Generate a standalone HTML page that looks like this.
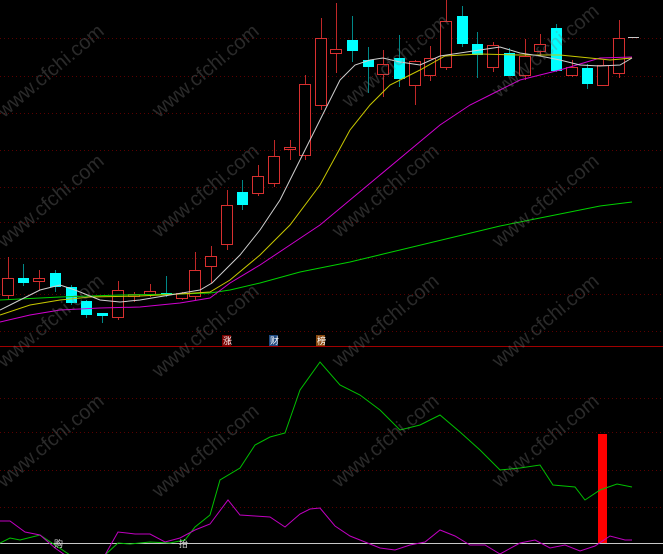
<!DOCTYPE html>
<html><head><meta charset="utf-8"><style>
html,body{margin:0;padding:0;background:#000;width:663px;height:554px;overflow:hidden}
.wm{position:absolute;font:20px "Liberation Sans",sans-serif;color:rgba(120,120,120,.35);transform:rotate(-40deg);white-space:nowrap}
</style></head><body>
<svg width="663" height="554" style="position:absolute;left:0;top:0" xmlns="http://www.w3.org/2000/svg">
<g stroke="#5a0000" stroke-dasharray="1,3" stroke-width="1">
<line x1="0" y1="38.5" x2="663" y2="38.5"/><line x1="0" y1="76.5" x2="663" y2="76.5"/><line x1="0" y1="113.5" x2="663" y2="113.5"/><line x1="0" y1="150.5" x2="663" y2="150.5"/><line x1="0" y1="187.5" x2="663" y2="187.5"/><line x1="0" y1="222.5" x2="663" y2="222.5"/><line x1="0" y1="258.5" x2="663" y2="258.5"/><line x1="0" y1="294.5" x2="663" y2="294.5"/><line x1="0" y1="331.5" x2="663" y2="331.5"/>
<line x1="0" y1="398.5" x2="663" y2="398.5"/><line x1="0" y1="432.5" x2="663" y2="432.5"/><line x1="0" y1="470.5" x2="663" y2="470.5"/><line x1="0" y1="507.5" x2="663" y2="507.5"/>
</g>
<line x1="0" y1="346.5" x2="663" y2="346.5" stroke="#a00000"/>
<g id="c"></g>
<polyline fill="none" stroke="#00d000" points="0,300 60,297 120,295 180,294 210,293 230,290 260,283 300,272 350,262 400,250 450,238 500,226 550,216 600,206 632,202"/>
<polyline fill="none" stroke="#d000d0" points="0,322 30,315 60,310 100,308 140,307 180,303 210,298 230,283 260,265 290,245 320,225 350,200 380,175 410,150 440,125 470,105 500,90 520,80 540,75 560,70 580,64 600,58 632,57"/>
<polyline fill="none" stroke="#c8c800" points="0,315 30,305 60,300 90,297 140,296 180,294 210,292 230,280 260,255 290,225 320,185 350,130 370,105 390,85 420,70 445,56 480,54 520,55 560,55 590,58 610,60 632,58"/>
<polyline fill="none" stroke="#d0d0d0" points="0,310 20,300 40,290 60,285 75,290 100,300 120,302 140,300 170,295 200,290 212,283 225,270 240,255 260,230 280,200 300,160 320,120 340,80 355,65 370,60 383,58 400,62 420,65 440,56 460,53 480,50 500,47 520,53 540,56 560,60 580,65 600,66 620,65 632,58"/>
<line x1="628" y1="37.5" x2="639" y2="37.5" stroke="#c8c8c8"/>
<line x1="0" y1="543.5" x2="663" y2="543.5" stroke="#c8c8c8"/>
<rect x="598" y="434" width="9" height="109" fill="#ff0000"/>
<polyline fill="none" stroke="#00c000" points="0,543 10,538 20,540 40,535 55,545 70,555 105,555 118,543 130,544 150,542 170,543 185,540 195,527 210,515 220,480 240,468 255,445 270,437 285,433 300,390 320,362 340,385 360,395 380,410 400,430 420,425 440,415 460,432 480,450 500,470 520,468 540,465 553,485 575,487 585,500 600,490 617,484 632,487"/>
<polyline fill="none" stroke="#c000c0" points="0,521 10,521 25,532 40,535 55,548 65,555 105,555 118,532 135,534 150,534 165,542 180,538 195,530 210,524 228,500 240,515 255,516 270,517 285,527 300,514 310,509 320,508 335,526 350,536 365,542 380,548 395,550 410,545 425,542 440,530 455,536 470,545 485,545 500,554 520,543 535,540 550,548 565,545 580,551 595,546 610,536 625,540 632,540"/>
<rect x="222" y="335" width="9" height="11" fill="#7a0000"/><text x="223" y="344" font-size="9" fill="#fff" font-family="Noto Sans CJK SC,sans-serif">涨</text>
<rect x="269" y="335" width="9" height="11" fill="#204a80"/><text x="270" y="344" font-size="9" fill="#fff" font-family="Noto Sans CJK SC,sans-serif">财</text>
<rect x="316" y="335" width="9" height="11" fill="#8a4a10"/><text x="317" y="344" font-size="9" fill="#fff" font-family="Noto Sans CJK SC,sans-serif">榜</text>
<text x="54" y="547" font-size="9" fill="#ddd" font-family="Noto Sans CJK SC,sans-serif">购</text>
<text x="179" y="547" font-size="9" fill="#ddd" font-family="Noto Sans CJK SC,sans-serif">抬</text>
</svg>
<div class="wm" style="left:-15px;top:60px">www.cfchi.com</div>
<div class="wm" style="left:140px;top:60px">www.cfchi.com</div>
<div class="wm" style="left:330px;top:50px">www.cfchi.com</div>
<div class="wm" style="left:480px;top:40px">www.cfchi.com</div>
<div class="wm" style="left:-15px;top:190px">www.cfchi.com</div>
<div class="wm" style="left:140px;top:180px">www.cfchi.com</div>
<div class="wm" style="left:320px;top:180px">www.cfchi.com</div>
<div class="wm" style="left:480px;top:190px">www.cfchi.com</div>
<div class="wm" style="left:-15px;top:310px">www.cfchi.com</div>
<div class="wm" style="left:140px;top:320px">www.cfchi.com</div>
<div class="wm" style="left:320px;top:310px">www.cfchi.com</div>
<div class="wm" style="left:480px;top:310px">www.cfchi.com</div>
<div class="wm" style="left:-15px;top:430px">www.cfchi.com</div>
<div class="wm" style="left:140px;top:440px">www.cfchi.com</div>
<div class="wm" style="left:320px;top:430px">www.cfchi.com</div>
<div class="wm" style="left:480px;top:430px">www.cfchi.com</div>
<script>
var d=[[8,'r',278,295,257,300],[23,'c',278,283,264,286],[39,'r',278,281,270,290],[55,'c',273,287,270,292],[71,'c',287,303,285,305],[86,'c',301,315,300,318],[102,'c',313,316,313,323],[118,'r',290,317,281,320],[134,'r',294,296,292,302],[150,'r',291,294,284,297],[166,'c',293,295,276,297],[182,'r',293,298,292,300],[195,'r',270,296,252,300],[211,'r',256,266,246,283],[227,'r',205,244,190,250],[242,'c',192,205,180,210],[258,'r',176,193,165,196],[274,'r',156,183,140,187],[290,'r',147,149,140,160],[305,'r',84,155,75,160],[321,'r',38,105,18,110],[336,'r',49,53,3,73],[352,'c',40,51,16,62],[368,'c',60,67,47,93],[383,'r',64,74,50,97],[399,'c',58,79,35,87],[415,'r',61,85,60,105],[430,'r',58,75,46,81],[446,'r',21,67,0,70],[462,'c',16,44,6,47],[477,'c',44,55,32,78],[493,'r',45,67,42,72],[509,'c',53,76,48,76],[525,'r',56,75,39,80],[540,'r',44,51,34,56],[556,'c',28,71,24,72],[572,'r',67,75,60,77],[587,'c',68,84,64,89],[603,'r',65,85,60,86],[619,'r',38,73,20,78]];
var s='';d.forEach(function(a){var x=a[0],red=a[1]=='r',col=red?'#d83030':'#00ffff',wc=red?'#c02828':'#008888';
s+='<line x1="'+(x+.5)+'" y1="'+a[4]+'" x2="'+(x+.5)+'" y2="'+a[5]+'" stroke="'+wc+'"/>';
if(red)s+='<rect x="'+(x-5.5)+'" y="'+(a[2]+.5)+'" width="11" height="'+Math.max(1,a[3]-a[2])+'" fill="#000" stroke="'+col+'"/>';
else s+='<rect x="'+(x-5)+'" y="'+a[2]+'" width="11" height="'+Math.max(2,a[3]-a[2])+'" fill="'+col+'"/>';});
document.getElementById('c').innerHTML=s;
</script>
</body></html>
